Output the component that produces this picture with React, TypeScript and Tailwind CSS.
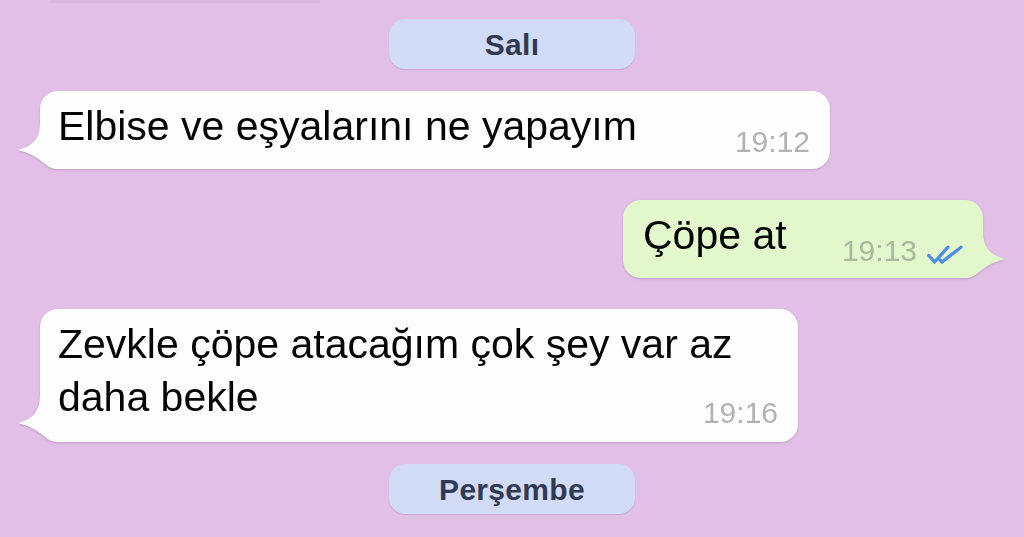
import React from "react";

function TailLeft() {
  return (
    <svg
      className="absolute left-[-22px] bottom-0"
      width="44"
      height="46"
      viewBox="0 0 44 46"
    >
      <path d="M22 0 Q22 22 0 27 Q14 30 26 40 Q32 46 44 46 L44 0 Z" fill="currentColor" />
    </svg>
  );
}

function TailRight() {
  return (
    <svg
      className="absolute right-[-22px] bottom-0"
      width="44"
      height="46"
      viewBox="0 0 44 46"
    >
      <path d="M22 0 Q22 22 44 27 Q30 30 18 40 Q12 46 0 46 L0 0 Z" fill="currentColor" />
    </svg>
  );
}

function DoubleCheck() {
  return (
    <svg width="36" height="20" viewBox="0 0 36 20" className="ml-[10px] mb-[1px]">
      <path
        d="M1.8 10.5 L7.5 17 L21 2.2"
        fill="none"
        stroke="#4f8de8"
        strokeWidth="3.3"
        strokeLinecap="round"
        strokeLinejoin="round"
      />
      <path
        d="M13 15 L15 17 L34 2.2"
        fill="none"
        stroke="#4f8de8"
        strokeWidth="3.3"
        strokeLinecap="round"
        strokeLinejoin="round"
      />
    </svg>
  );
}

function DatePill({ label, className }: { label: string; className: string }) {
  return (
    <div
      className={`shrink-0 self-center w-[246px] h-[50px] rounded-[16px] bg-[#d1dbf5] shadow-[0_1px_1px_rgba(90,60,110,0.18)] flex items-center justify-center text-[30px] tracking-[0.3px] font-semibold text-[#313a52] ${className}`}
    >
      {label}
    </div>
  );
}

export default function App() {
  return (
    <div
      className="w-full h-[537px] overflow-hidden bg-[#e1bfe6] flex flex-col"
      style={{ fontFamily: '"Liberation Sans", Arial, sans-serif' }}
    >
      {/* shadow of the bubble above the fold */}
      <div className="shrink-0 ml-[50px] w-[270px] h-[3px] bg-[#d9b7de]" />

      <DatePill label="Salı" className="mt-[16px]" />

      {/* incoming */}
      <div className="shrink-0 mt-[22px] ml-[40px] w-[790px] relative text-[#fefefe] drop-shadow-[0_1px_1px_rgba(80,40,100,0.22)]">
        <TailLeft />
        <div className="relative rounded-[18px] bg-[#fefefe] pt-[9px] pb-[16px] pl-[18px] pr-[20px] flex items-end justify-between">
          <span className="flex-1 min-w-0 whitespace-nowrap text-[41px] leading-[53px] text-[#050505]">
            Elbise ve eşyalarını ne yapayım
          </span>
          <span className="shrink-0 text-[30px] leading-[30px] mb-[-4px] text-[#b2b2b2]">19:12</span>
        </div>
      </div>

      {/* outgoing */}
      <div className="shrink-0 mt-[31px] ml-[623px] w-[360px] relative text-[#e2f7cb] drop-shadow-[0_1px_1px_rgba(80,40,100,0.22)]">
        <TailRight />
        <div className="relative rounded-[18px] bg-[#e2f7cb] pt-[9px] pb-[16px] pl-[20px] pr-[20px] flex items-end justify-between">
          <span className="flex-1 min-w-0 whitespace-nowrap text-[41px] leading-[53px] text-[#050505]">Çöpe at</span>
          <span className="shrink-0 flex items-end mb-[-4px]">
            <span className="text-[30px] leading-[30px] text-[#a9b89f]">19:13</span>
            <DoubleCheck />
          </span>
        </div>
      </div>

      {/* incoming, two lines */}
      <div className="shrink-0 mt-[31px] ml-[40px] w-[758px] relative text-[#fefefe] drop-shadow-[0_1px_1px_rgba(80,40,100,0.22)]">
        <TailLeft />
        <div className="relative rounded-[18px] bg-[#fefefe] pt-[9px] pb-[18px] pl-[18px] pr-[20px] flex items-end justify-between">
          <span className="flex-1 min-w-0 whitespace-nowrap text-[41px] leading-[53px] text-[#050505]">
            Zevkle çöpe atacağım çok şey var az
            <br />
            daha bekle
          </span>
          <span className="shrink-0 text-[30px] leading-[30px] mb-[-4px] text-[#b2b2b2]">19:16</span>
        </div>
      </div>

      <DatePill label="Perşembe" className="mt-[22px]" />
    </div>
  );
}
